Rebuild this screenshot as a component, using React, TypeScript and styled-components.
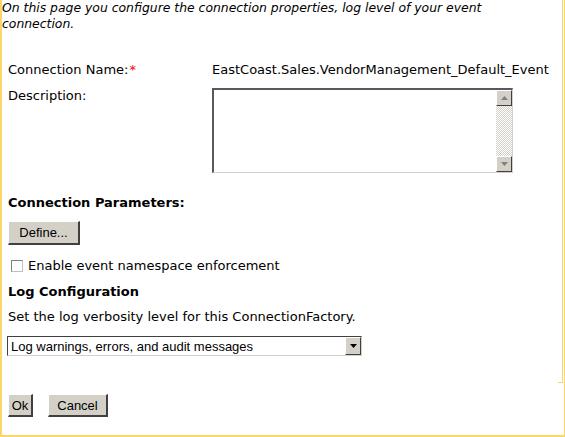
import React from "react";
import styled, { createGlobalStyle } from "styled-components";

const GlobalStyle = createGlobalStyle`
  html, body {
    margin: 0;
    padding: 0;
    background: #ffffff;
  }
`;

const YELLOW = "#fcd66a";
const FACE = "#d4d0c8";

export default function App(): JSX.Element {
  return (
    <>
      <GlobalStyle />
      <Frame>
        <Panel>
          <Intro>
            On this page you configure the connection properties, log level of your event
            connection.
          </Intro>
          <FormGrid>
            <Label>
              Connection Name:<Required>*</Required>
            </Label>
            <Value>EastCoast.Sales.VendorManagement_Default_Event</Value>
            <Label>Description:</Label>
            <TextBox>
              <TextArea />
              <ScrollBar>
                <ScrollButton>
                  <svg width="7" height="4" viewBox="0 0 7 4">
                    <path d="M3.5 0 L7 4 L0 4 Z" fill="#808080" />
                  </svg>
                </ScrollButton>
                <ScrollTrack />
                <ScrollButton>
                  <svg width="7" height="4" viewBox="0 0 7 4">
                    <path d="M0 0 L7 0 L3.5 4 Z" fill="#808080" />
                  </svg>
                </ScrollButton>
              </ScrollBar>
            </TextBox>
          </FormGrid>

          <Heading $top={22}>Connection Parameters:</Heading>
          <WinButton $width={72} $height={24} $top={10}>
            Define...
          </WinButton>

          <CheckRow>
            <CheckBox />
            <CheckLabel>Enable event namespace enforcement</CheckLabel>
          </CheckRow>

          <Heading $top={10}>Log Configuration</Heading>
          <Text>Set the log verbosity level for this ConnectionFactory.</Text>

          <Select>
            <SelectValue>Log warnings, errors, and audit messages</SelectValue>
            <SelectButton>
              <svg width="7" height="4" viewBox="0 0 7 4">
                <path d="M0 0 L7 0 L3.5 4 Z" fill="#000000" />
              </svg>
            </SelectButton>
          </Select>
        </Panel>

        <Footer>
          <WinButton $width={25} $height={23}>Ok</WinButton>
          <WinButton $width={60} $height={23}>Cancel</WinButton>
        </Footer>
      </Frame>
    </>
  );
}

const Frame = styled.div`
  width: 565px;
  height: 437px;
  box-sizing: border-box;
  border-left: 2px solid ${YELLOW};
  border-right: 1px solid ${YELLOW};
  border-bottom: 2px solid ${YELLOW};
  display: flex;
  flex-direction: column;
  font-family: "DejaVu Sans", Verdana, sans-serif;
  font-size: 13px;
  color: #000000;
`;

const Panel = styled.div`
  position: relative;
  width: 561px;
  height: 383px;
  box-sizing: border-box;
  border-right: 1px solid ${YELLOW};
  padding-left: 6px;

  &::after {
    content: "";
    position: absolute;
    right: -1px;
    bottom: 0;
    width: 5px;
    height: 1px;
    background: ${YELLOW};
  }
`;

const Intro = styled.p`
  margin: 0 0 0 -6px;
  font-style: italic;
  font-size: 12.4px;
  line-height: 16px;
  width: 520px;
`;

const FormGrid = styled.div`
  display: grid;
  grid-template-columns: 204px auto;
  row-gap: 10px;
  margin-top: 30px;
  align-items: start;
`;

const Label = styled.div`
  line-height: 16px;
`;

const Required = styled.span`
  color: #ff0000;
  margin-left: 1px;
`;

const Value = styled.div`
  line-height: 16px;
  white-space: nowrap;
`;

const TextBox = styled.div`
  display: flex;
  width: 301px;
  height: 85px;
  box-sizing: border-box;
  border-top: 2px solid #5a5a5a;
  border-left: 2px solid #5a5a5a;
  border-right: 1px solid ${FACE};
  border-bottom: 1px solid ${FACE};
  background: #ffffff;
`;

const TextArea = styled.div`
  flex: 1;
`;

const ScrollBar = styled.div`
  width: 16px;
  display: flex;
  flex-direction: column;
`;

const ScrollButton = styled.div`
  height: 16px;
  box-sizing: border-box;
  background: ${FACE};
  border-top: 1px solid #ffffff;
  border-left: 1px solid #ffffff;
  border-right: 1px solid #404040;
  border-bottom: 1px solid #404040;
  display: flex;
  align-items: center;
  justify-content: center;
`;

const ScrollTrack = styled.div`
  flex: 1;
  background-color: #ffffff;
  background-image: repeating-conic-gradient(${FACE} 0% 25%, #ffffff 0% 50%);
  background-size: 2px 2px;
`;

const Heading = styled.div<{ $top: number }>`
  margin-top: ${(p) => p.$top}px;
  font-weight: bold;
  line-height: 16px;
`;

const WinButton = styled.button<{ $width: number; $height: number; $top?: number }>`
  display: flex;
  align-items: center;
  justify-content: center;
  width: ${(p) => p.$width}px;
  height: ${(p) => p.$height}px;
  margin-top: ${(p) => p.$top ?? 0}px;
  padding: 0;
  box-sizing: border-box;
  background: ${FACE};
  border-top: 1px solid #ffffff;
  border-left: 1px solid #ffffff;
  border-right: 2px solid #404040;
  border-bottom: 2px solid #404040;
  font-family: "Liberation Sans", Arial, sans-serif;
  font-size: 13px;
  color: #000000;
`;

const CheckRow = styled.div`
  display: flex;
  align-items: center;
  gap: 5px;
  margin-top: 13px;
  padding-left: 3px;
`;

const CheckBox = styled.span`
  width: 12px;
  height: 12px;
  box-sizing: border-box;
  border-top: 1px solid #808080;
  border-left: 1px solid #808080;
  border-right: 1px solid #c0c0c0;
  border-bottom: 1px solid #c0c0c0;
  background: #ffffff;
`;

const CheckLabel = styled.span`
  line-height: 16px;
`;

const Text = styled.div`
  margin-top: 9px;
  line-height: 16px;
`;

const Select = styled.div`
  display: flex;
  align-items: stretch;
  width: 355px;
  height: 20px;
  margin-top: 11px;
  margin-left: -1px;
  box-sizing: border-box;
  border-top: 1px solid #404040;
  border-left: 1px solid #404040;
  border-right: 1px solid ${FACE};
  border-bottom: 1px solid ${FACE};
  background: #ffffff;
`;

const SelectValue = styled.div`
  flex: 1;
  display: flex;
  align-items: center;
  padding-left: 3px;
  font-family: "Liberation Sans", Arial, sans-serif;
  font-size: 13px;
`;

const SelectButton = styled.div`
  width: 16px;
  box-sizing: border-box;
  background: ${FACE};
  border-top: 1px solid #ffffff;
  border-left: 1px solid #ffffff;
  border-right: 1px solid #404040;
  border-bottom: 1px solid #404040;
  display: flex;
  align-items: center;
  justify-content: center;
`;

const Footer = styled.div`
  display: flex;
  gap: 15px;
  padding: 11px 0 0 6px;
`;
